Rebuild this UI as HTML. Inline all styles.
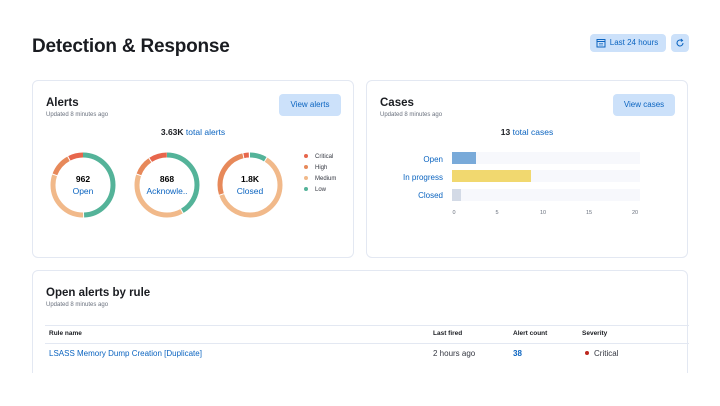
<!DOCTYPE html>
<html><head><style>
*{box-sizing:border-box;margin:0;padding:0}
body{width:720px;height:406px;background:#fff;font-family:"Liberation Sans",sans-serif;color:#1a1c21;position:relative;overflow:hidden}
.abs{position:absolute}
.card{position:absolute;border:1px solid #e3e8f2;border-radius:6px;background:#fff}
h2{font-size:11.5px;font-weight:bold}
.sub{font-size:6px;color:#69707d;margin-top:3px}
.btn{position:absolute;background:#cce1fa;color:#0b64c0;font-size:8px;border-radius:4px;text-align:center}
.link{color:#0b64c0}
</style></head><body>
<div class="abs" style="left:32px;top:36px;font-size:19px;font-weight:bold;letter-spacing:-0.2px">Detection &amp; Response</div>
<div class="btn" style="left:590px;top:34px;width:76px;height:18px;line-height:18px;padding-left:12px">Last 24 hours
<svg class="abs" style="left:6px;top:4px" width="10" height="10" viewBox="0 0 10 10"><rect x="1" y="1.5" width="8" height="7.5" fill="none" stroke="#0b64c0" stroke-width="1"/><line x1="1" y1="3.5" x2="9" y2="3.5" stroke="#0b64c0"/><line x1="3" y1="5.5" x2="7" y2="5.5" stroke="#0b64c0" stroke-width=".6"/><line x1="3" y1="7" x2="7" y2="7" stroke="#0b64c0" stroke-width=".6"/></svg></div>
<div class="btn" style="left:671px;top:34px;width:18px;height:18px"><svg style="margin-top:4px" width="10" height="10" viewBox="0 0 10 10"><path d="M8 5A3 3 0 1 1 6.5 2.4" fill="none" stroke="#0b64c0" stroke-width="1"/><path d="M6 1L7.5 2.5L6 3.5" fill="none" stroke="#0b64c0" stroke-width="1"/></svg></div>

<div class="card" style="left:32px;top:80px;width:322px;height:178px">
<div class="abs" style="left:13px;top:16px"><h2>Alerts</h2><div class="sub">Updated 8 minutes ago</div></div>
<div class="btn" style="left:246px;top:13px;width:62px;height:22px;line-height:22px">View alerts</div>
<div class="abs" style="left:0;width:320px;top:46px;text-align:center;font-size:8.5px"><b>3.63K</b> <span class="link">total alerts</span></div>
<svg class="abs" style="left:0;top:0" width="320" height="176">
<g transform="rotate(-90)" fill="none" stroke-width="5">
<g transform="translate(-104,50)">
<circle r="30" stroke="#54b399" stroke-dasharray="93 200" stroke-dashoffset="0"/>
<circle r="30" stroke="#f1b98a" stroke-dasharray="57 200" stroke-dashoffset="-94"/>
<circle r="30" stroke="#e7895a" stroke-dasharray="21 200" stroke-dashoffset="-152"/>
<circle r="30" stroke="#e7664c" stroke-dasharray="15 200" stroke-dashoffset="-174"/>
</g>
<g transform="translate(-104,134)">
<circle r="30" stroke="#54b399" stroke-dasharray="78 200"/>
<circle r="30" stroke="#f1b98a" stroke-dasharray="72 200" stroke-dashoffset="-79"/>
<circle r="30" stroke="#e7895a" stroke-dasharray="18 200" stroke-dashoffset="-152"/>
<circle r="30" stroke="#e7664c" stroke-dasharray="17 200" stroke-dashoffset="-171"/>
</g>
<g transform="translate(-104,217)">
<circle r="30" stroke="#54b399" stroke-dasharray="16 200"/>
<circle r="30" stroke="#f1b98a" stroke-dasharray="114 200" stroke-dashoffset="-17"/>
<circle r="30" stroke="#e7895a" stroke-dasharray="49 200" stroke-dashoffset="-132"/>
<circle r="30" stroke="#e7664c" stroke-dasharray="5 200" stroke-dashoffset="-182"/>
</g></g>
<g font-size="8.5" text-anchor="middle">
<text x="50" y="101" font-weight="bold">962</text><text x="50" y="113" fill="#0b64c0">Open</text>
<text x="134" y="101" font-weight="bold">868</text><text x="134" y="113" fill="#0b64c0">Acknowle..</text>
<text x="217" y="101" font-weight="bold">1.8K</text><text x="217" y="113" fill="#0b64c0">Closed</text>
</g>
<g font-size="6" fill="#343741">
<circle cx="273" cy="75" r="2" fill="#e7664c"/><text x="282" y="77">Critical</text>
<circle cx="273" cy="86" r="2" fill="#e7895a"/><text x="282" y="88">High</text>
<circle cx="273" cy="97" r="2" fill="#f1b98a"/><text x="282" y="99">Medium</text>
<circle cx="273" cy="108" r="2" fill="#54b399"/><text x="282" y="110">Low</text>
</g></svg>
</div>

<div class="card" style="left:366px;top:80px;width:322px;height:178px">
<div class="abs" style="left:13px;top:16px"><h2>Cases</h2><div class="sub">Updated 8 minutes ago</div></div>
<div class="btn" style="left:246px;top:13px;width:62px;height:22px;line-height:22px">View cases</div>
<div class="abs" style="left:0;width:320px;top:46px;text-align:center;font-size:8.5px"><b>13</b> <span class="link">total cases</span></div>
<svg class="abs" style="left:0;top:0" width="320" height="176">
<rect x="85" y="71" width="188" height="12" fill="#f7f8fc"/>
<rect x="85" y="89" width="188" height="12" fill="#f7f8fc"/>
<rect x="85" y="108" width="188" height="12" fill="#f7f8fc"/>
<rect x="85" y="71" width="24" height="12" fill="#79aad9"/>
<rect x="85" y="89" width="79" height="12" fill="#f1d86f"/>
<rect x="85" y="108" width="9" height="12" fill="#d3dae6"/>
<g font-size="8" fill="#0b64c0" text-anchor="end"><text x="76" y="81">Open</text><text x="76" y="99">In progress</text><text x="76" y="117">Closed</text></g>
<g font-size="5.5" fill="#69707d" text-anchor="middle"><text x="87" y="133">0</text><text x="130" y="133">5</text><text x="176" y="133">10</text><text x="222" y="133">15</text><text x="268" y="133">20</text></g>
</svg>
</div>

<div class="card" style="left:32px;top:270px;width:656px;height:120px">
<div class="abs" style="left:13px;top:16px"><h2>Open alerts by rule</h2><div class="sub">Updated 8 minutes ago</div></div>
<div class="abs" style="left:12px;top:54px;width:644px;border-top:1px solid #e3e8f2"></div>
<div class="abs" style="left:12px;top:72px;width:644px;border-top:1px solid #e3e8f2"></div>
<div class="abs" style="left:12px;top:59px;font-size:6.5px;font-weight:bold;width:644px">
<span class="abs" style="left:4px">Rule name</span><span class="abs" style="left:388px">Last fired</span><span class="abs" style="left:468px">Alert count</span><span class="abs" style="left:537px">Severity</span></div>
<div class="abs" style="left:12px;top:78px;font-size:8px;width:644px">
<span class="abs link" style="left:4px">LSASS Memory Dump Creation [Duplicate]</span><span class="abs" style="left:388px;color:#343741">2 hours ago</span><span class="abs link" style="left:468px;font-weight:bold">38</span><span class="abs" style="left:540px;color:#343741"><span style="display:inline-block;width:4px;height:4px;border-radius:2px;background:#bd271e;margin-right:5px;vertical-align:1px"></span>Critical</span></div>
</div>
<div class="abs" style="left:0;top:373px;width:720px;height:33px;background:#fff"></div>
</body></html>
